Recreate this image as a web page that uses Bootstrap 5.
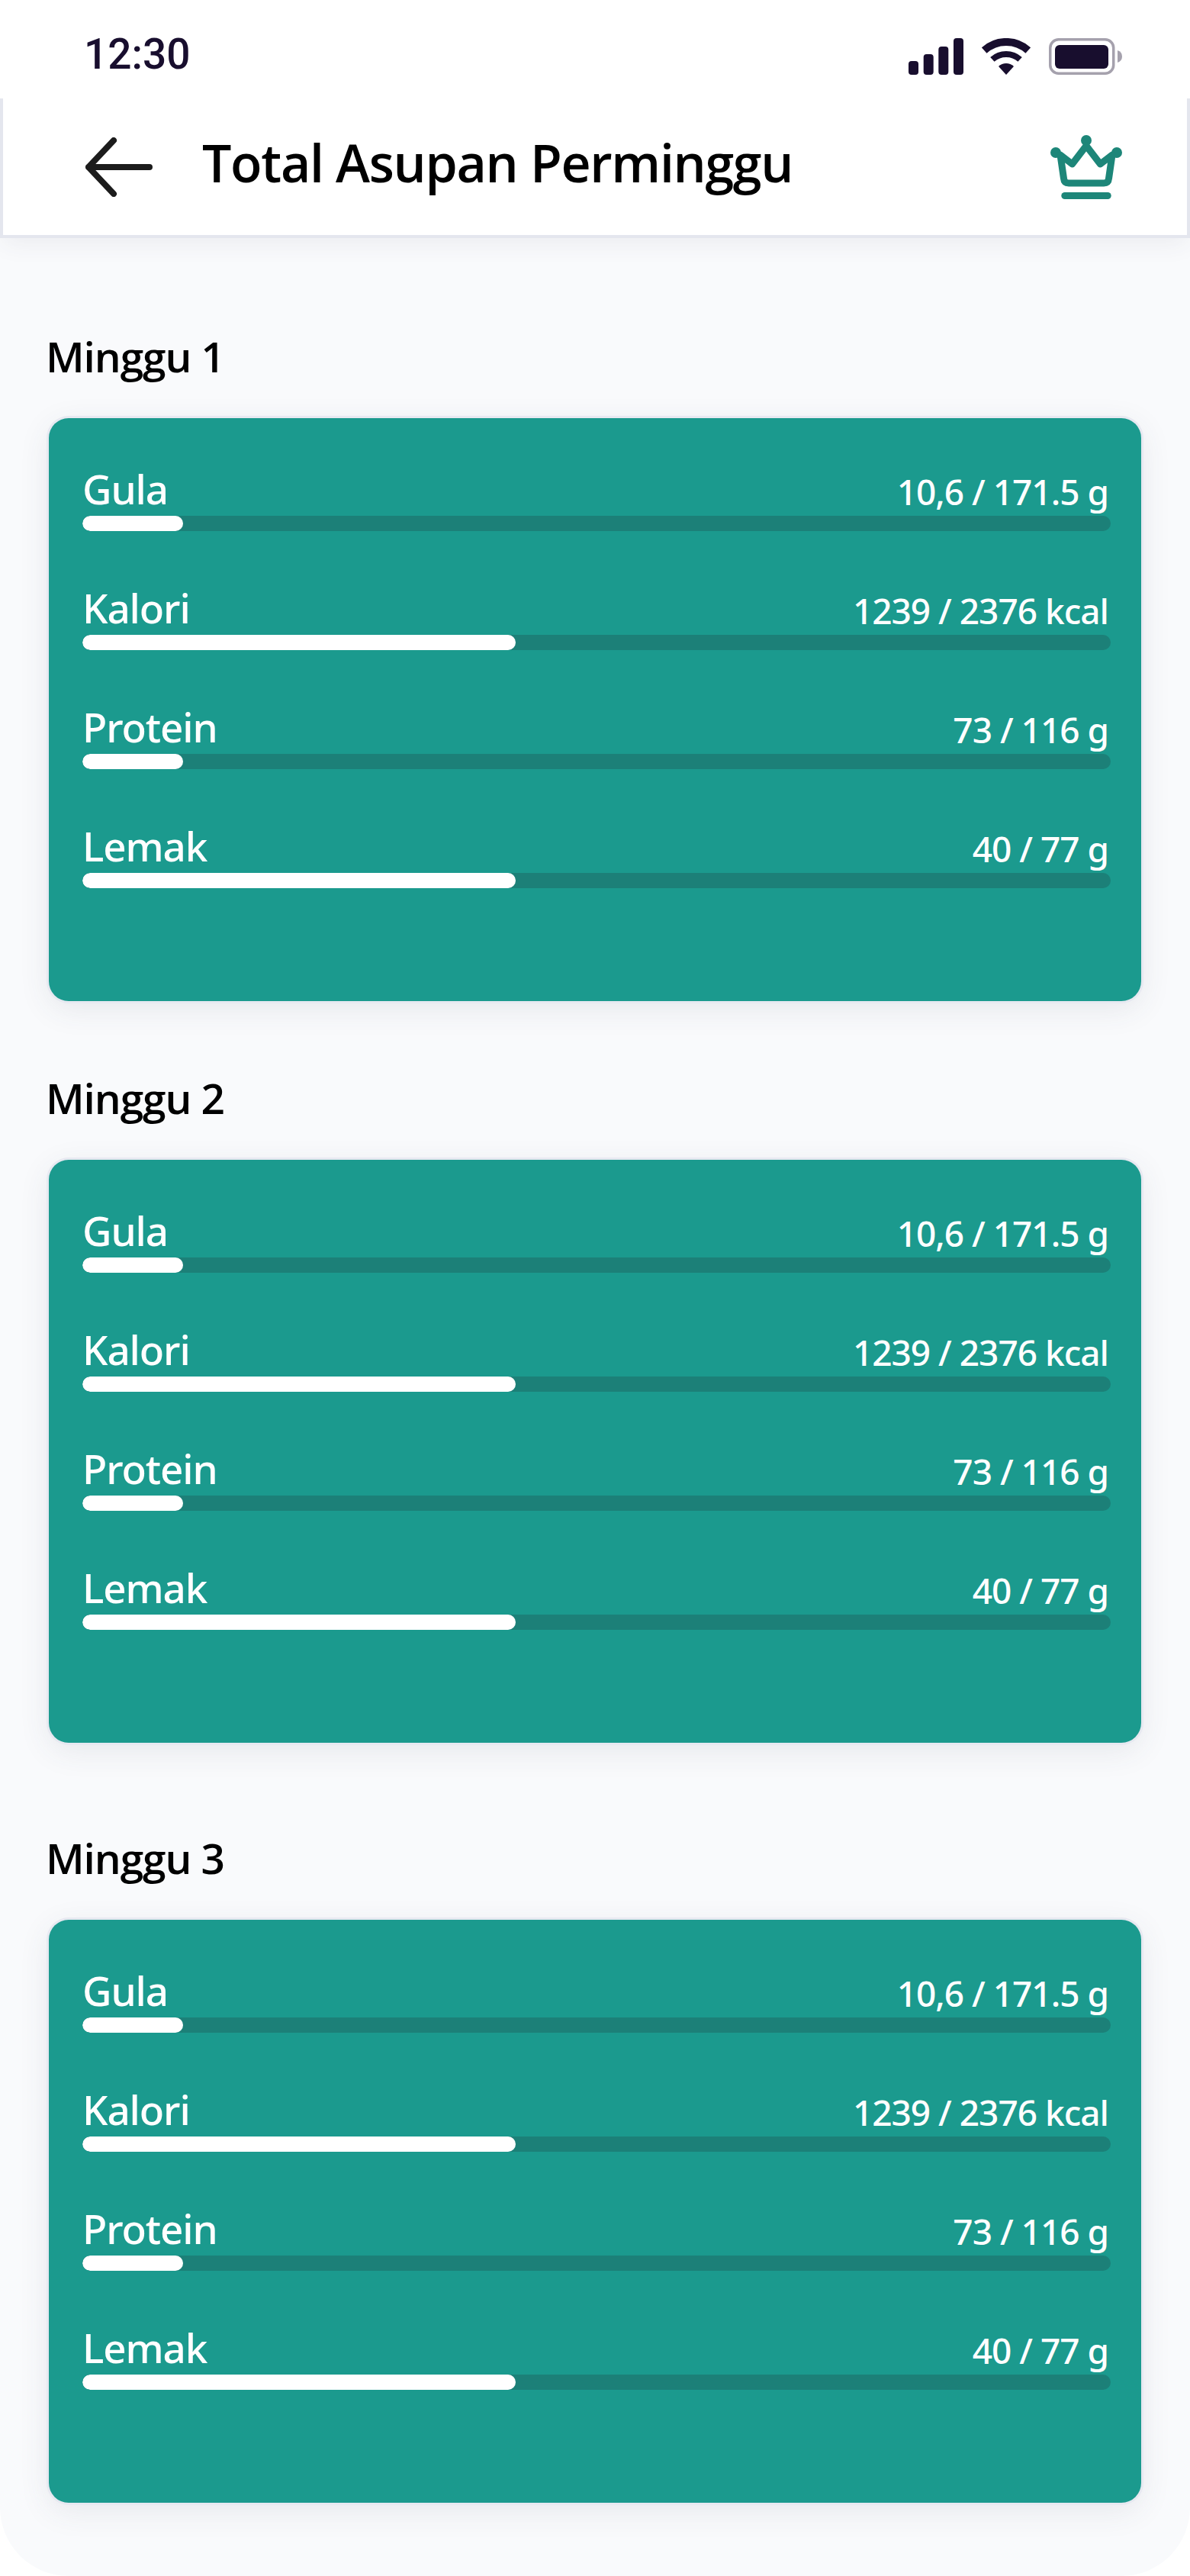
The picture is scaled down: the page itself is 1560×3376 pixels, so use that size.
<!DOCTYPE html>
<html lang="id">
<head>
    <meta charset="UTF-8">
    <title>Total Asupan Perminggu</title>
    <link rel="stylesheet" href="https://cdn.jsdelivr.net/npm/bootstrap@5.3.0/dist/css/bootstrap.min.css">
    <style>
        /* warna dan ukuran dari desain */
        body { background: #fff; font-family: "Open Sans", "Noto Sans", sans-serif; color: #000; }
        .screen { background: #f9fafc; min-height: 3376px; border-radius: 0 0 90px 90px; overflow: hidden; }
        .status-bar { position: relative; z-index: 2; height: 129px; background: #fff; padding: 50px 89px 0 112px; }
        .status-time { font-family: Roboto, sans-serif; font-weight: 500; font-size: 55px; line-height: 42px; color: #180e2e; margin-left: -2px; }
        .top-bar { position: relative; z-index: 1; height: 179px; margin: 0 4px; padding: 0 85px 0 108px; background: #fff; box-shadow: 0 0 0 4px #e4e6ee, 0 10px 30px rgba(60, 66, 90, .08); }
        .top-title { font-size: 68px; font-weight: 600; line-height: 80px; margin: 0 0 12px 65px; letter-spacing: -1.3px; }
        .weeks { padding: 0 64px; }
        .week-title { font-size: 55px; font-weight: 600; line-height: 70px; margin: 0 0 46px -4px; letter-spacing: -1.1px; }
        .week-one { padding-top: 124px; }
        .week-two { padding-top: 92px; }
        .week-three { padding-top: 116px; }
        .week-card { background: #1b9a8e; border: 0; border-radius: 26px; color: #fff; padding: 68px 40px 72px 44px; box-shadow: 0 0 0 3px #e7e9f1, 0 10px 40px rgba(60, 66, 90, .1); }
        .intake-row { margin-bottom: 76px; }
        .intake-name { font-family: "Noto Sans", sans-serif; font-size: 53px; font-weight: 500; line-height: 50px; padding-bottom: 10px; letter-spacing: -1.1px; }
        .intake-val { font-family: "Noto Sans", sans-serif; font-size: 46px; font-weight: 500; line-height: 56px; padding: 0 3px 4px 0; letter-spacing: -1px; }
        .intake-bar { height: 20px; background: #1c8078; border-radius: 10px; }
        .intake-bar .progress-bar { background: #fff; border-radius: 10px; }
    </style>
</head>
<body>

<div class="screen">
    <!-- Status bar -->
    <div class="status-bar d-flex justify-content-between align-items-start">
        <div class="status-time">12:30</div>
        <div class="d-flex gap-4">
            <svg width="72" height="48" viewBox="0 0 72 48" fill="#180e2e">
                <rect x="0" y="30" width="13" height="18" rx="4"/>
                <rect x="19.7" y="21" width="13" height="27" rx="4"/>
                <rect x="39.3" y="11" width="13" height="37" rx="4"/>
                <rect x="59" y="0" width="13" height="48" rx="4"/>
            </svg>
            <svg width="64" height="48" viewBox="0 0 64 48" fill="none" stroke="#180e2e">
                <path d="M3.2 16A43 43 0 0 1 60.8 16" stroke-width="10"/>
                <path d="M13.9 27.9A27 27 0 0 1 50.1 27.9" stroke-width="8"/>
                <path d="M32 48L22 36.9A15 15 0 0 1 42 36.9Z" fill="#180e2e" stroke="none"/>
            </svg>
            <svg width="96" height="48" viewBox="0 0 96 48">
                <rect x="1.75" y="1.75" width="83" height="44.5" rx="11" fill="none" stroke="#a5a1ad" stroke-width="3.5"/>
                <rect x="8" y="9" width="70" height="31" rx="6" fill="#180e2e"/>
                <path d="M90 16q6 2 6 8t-6 8z" fill="#a5a1ad"/>
            </svg>
        </div>
    </div>

    <!-- Header -->
    <nav class="top-bar d-flex align-items-center">
        <svg width="88" height="78" viewBox="0 0 88 78" fill="none" stroke="#1c1c1c" stroke-width="8" stroke-linecap="round" stroke-linejoin="round">
            <path d="M84 39H4M37 4L4 39L37 74"/>
        </svg>
        <h1 class="top-title flex-grow-1">Total Asupan Perminggu</h1>
        <svg width="94" height="84" viewBox="0 0 94 84" fill="#1d8679">
            <circle cx="47" cy="7" r="7"/>
            <circle cx="7" cy="23" r="7"/>
            <circle cx="87" cy="23" r="7"/>
            <path d="M13 26L17.5 57Q18 63 24 63H70Q76 63 76.5 57L81 26L65.4 38L47 14L28.6 38Z" fill="none" stroke="#1d8679" stroke-width="9" stroke-linejoin="round"/>
            <rect x="14.3" y="75" width="65.4" height="9" rx="4.5"/>
        </svg>
    </nav>

    <!-- Daftar minggu -->
    <div class="weeks" id="week-list"></div>
</div>

<script src="https://cdn.jsdelivr.net/npm/bootstrap@5.3.0/dist/js/bootstrap.bundle.min.js"></script>
<script>
document.addEventListener("DOMContentLoaded", function() {
    const intake = [
        { name: "Gula", val: "10,6 / 171.5 g", pct: 9.8 },
        { name: "Kalori", val: "1239 / 2376 kcal", pct: 42.1 },
        { name: "Protein", val: "73 / 116 g", pct: 9.8 },
        { name: "Lemak", val: "40 / 77 g", pct: 42.1 }
    ];
    const weeks = [
        { title: "Minggu 1", cls: "week-one" },
        { title: "Minggu 2", cls: "week-two" },
        { title: "Minggu 3", cls: "week-three" }
    ];

    let html = "";
    weeks.forEach(week => {
        let rows = "";
        intake.forEach(item => {
            rows += `
                <div class="intake-row">
                    <div class="d-flex justify-content-between">
                        <span class="intake-name">${item.name}</span>
                        <span class="intake-val">${item.val}</span>
                    </div>
                    <div class="progress intake-bar">
                        <div class="progress-bar" style="width: ${item.pct}%"></div>
                    </div>
                </div>`;
        });
        html += `
            <section class="${week.cls}">
                <h2 class="week-title">${week.title}</h2>
                <div class="card week-card">${rows}</div>
            </section>`;
    });
    document.getElementById("week-list").innerHTML = html;
});
</script>

</body>
</html>
